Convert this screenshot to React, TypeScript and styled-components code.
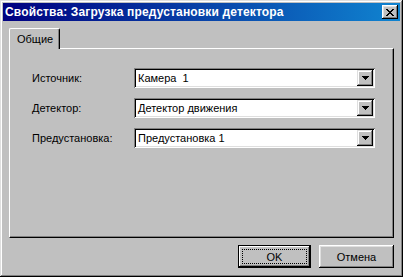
import React from 'react'
import styled, { createGlobalStyle } from 'styled-components'

const GlobalStyle = createGlobalStyle`
	html, body {
		margin: 0;
		padding: 0;
		background: #c0c0c0;
	}
	* {
		box-sizing: border-box;
	}
`

const Window = styled.div`
	width: 403px;
	height: 277px;
	padding: 3px;
	background: #c0c0c0;
	display: flex;
	flex-direction: column;
	font-family: 'Liberation Sans', Arial, sans-serif;
	font-size: 11px;
	color: #000;
	box-shadow: inset -1px -1px #000, inset 1px 1px #dfdfdf, inset -2px -2px #808080, inset 2px 2px #fff;
`

const TitleBar = styled.div`
	height: 18px;
	display: flex;
	align-items: center;
	justify-content: space-between;
	padding: 0 2px 0 2px;
	background: linear-gradient(to right, #000080, #1084d0);
	color: #fff;
	font-weight: bold;
	font-size: 12px;
	letter-spacing: 0.15px;
`

const CloseButton = styled.div`
	width: 16px;
	height: 14px;
	background: #c0c0c0;
	display: flex;
	align-items: center;
	justify-content: center;
	box-shadow: inset -1px -1px #000, inset 1px 1px #fff, inset -2px -2px #808080, inset 2px 2px #dfdfdf;
`

const Body = styled.div`
	flex: 1;
	display: flex;
	flex-direction: column;
	padding: 7px 6px 0 6px;
`

const TabStrip = styled.div`
	display: flex;
	height: 20px;
`

const Tab = styled.div`
	width: 51px;
	height: 21px;
	padding: 4px 0 0 7px;
	background: #c0c0c0;
	border-top: 1px solid #fff;
	border-left: 1px solid #fff;
	border-right: 1px solid #000;
	border-top-left-radius: 2px;
	border-top-right-radius: 2px;
	position: relative;
	z-index: 1;
	box-shadow: inset -1px 0 #808080;
`

const Panel = styled.div`
	height: 190px;
	padding: 19px 18px 0 22px;
	border-top: 1px solid #fff;
	border-left: 1px solid #fff;
	border-right: 1px solid #000;
	border-bottom: 1px solid #000;
	box-shadow: inset -1px -1px #808080;
	display: grid;
	grid-template-columns: 102px 1fr;
	grid-auto-rows: 20px;
	row-gap: 10px;
	align-items: center;
	align-content: start;
`

const Label = styled.div`
	padding-bottom: 1px;
`

const Combo = styled.div`
	height: 20px;
	display: flex;
	align-items: center;
	background: #fff;
	padding: 2px;
	box-shadow: inset 1px 1px #808080, inset -1px -1px #fff, inset 2px 2px #000, inset -2px -2px #dfdfdf;
`

const ComboText = styled.div`
	flex: 1;
	padding-left: 2px;
	white-space: pre;
`

const ArrowButton = styled.div`
	width: 16px;
	height: 16px;
	background: #c0c0c0;
	display: flex;
	align-items: center;
	justify-content: center;
	box-shadow: inset -1px -1px #000, inset 1px 1px #dfdfdf, inset -2px -2px #808080, inset 2px 2px #fff;
`

const Footer = styled.div`
	display: flex;
	justify-content: flex-end;
	gap: 8px;
	padding-top: 7px;
`

const Button = styled.div<{ $default?: boolean }>`
	width: ${p => (p.$default ? '73px' : '75px')};
	height: 23px;
	display: flex;
	align-items: center;
	justify-content: center;
	background: #c0c0c0;
	padding: 4px;
	box-shadow: ${p =>
		p.$default
			? 'inset 0 0 0 1px #000, inset -2px -2px #000, inset 2px 2px #fff, inset -3px -3px #808080'
			: 'inset -1px -1px #000, inset 1px 1px #fff, inset -2px -2px #808080, inset 2px 2px #dfdfdf'};
`

const FocusRing = styled.div`
	width: 100%;
	height: 100%;
	display: flex;
	align-items: center;
	justify-content: center;
	border: 1px dotted #000;
`

const Arrow = () => (
	<svg width="7" height="4" viewBox="0 0 7 4">
		<path d="M0 0h7v1h-1v1h-1v1h-1v1h-1v-1h-1v-1h-1v-1h-1z" fill="#000" />
	</svg>
)

const fields = [
	{ label: 'Источник:', value: 'Камера  1' },
	{ label: 'Детектор:', value: 'Детектор движения' },
	{ label: 'Предустановка:', value: 'Предустановка 1' },
]

const App = () => {
	return (
		<>
			<GlobalStyle />
			<Window>
				<TitleBar>
					<span>Свойства: Загрузка предустановки детектора</span>
					<CloseButton>
						<svg width="8" height="7" viewBox="0 0 8 7">
							<path
								d="M0 0h2v1h1v1h2v-1h1v-1h2v1h-1v1h-1v1h-1v1h1v1h1v1h1v1h-2v-1h-1v-1h-2v1h-1v1h-2v-1h1v-1h1v-1h1v-1h-1v-1h-1v-1h-1z"
								fill="#000"
							/>
						</svg>
					</CloseButton>
				</TitleBar>
				<Body>
					<TabStrip>
						<Tab>Общие</Tab>
					</TabStrip>
					<Panel>
						{fields.map(f => (
							<React.Fragment key={f.label}>
								<Label>{f.label}</Label>
								<Combo>
									<ComboText>{f.value}</ComboText>
									<ArrowButton>
										<Arrow />
									</ArrowButton>
								</Combo>
							</React.Fragment>
						))}
					</Panel>
					<Footer>
						<Button $default>
							<FocusRing>OK</FocusRing>
						</Button>
						<Button>Отмена</Button>
					</Footer>
				</Body>
			</Window>
		</>
	)
}

export default App
